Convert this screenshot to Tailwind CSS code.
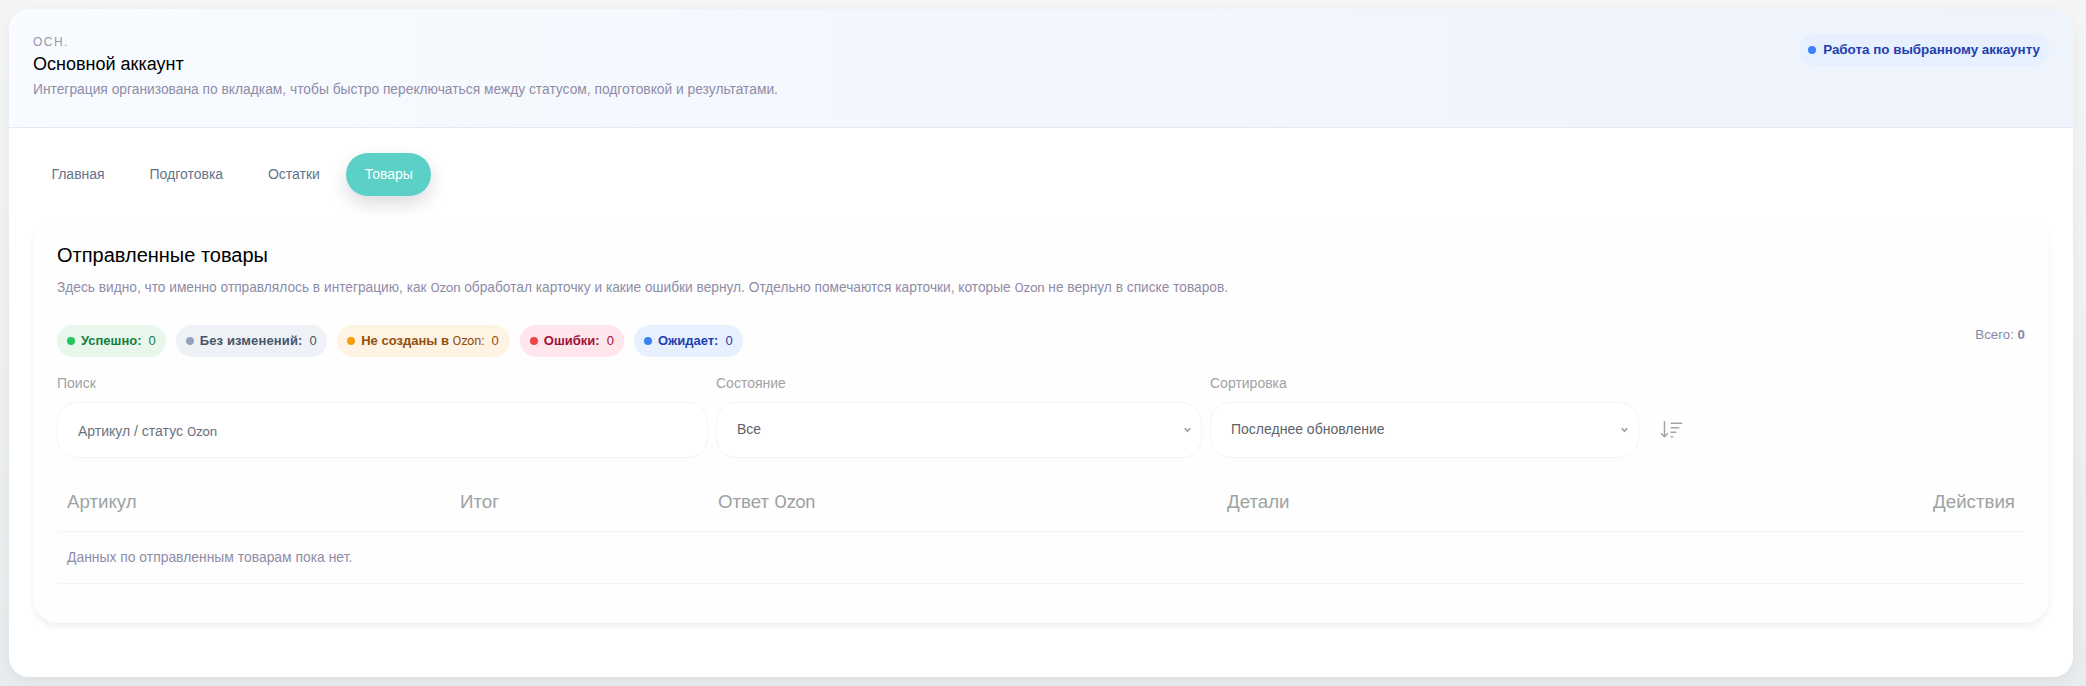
<!DOCTYPE html>
<html lang="ru">
<head>
<meta charset="utf-8">
<script src="https://cdn.jsdelivr.net/npm/@tailwindcss/browser@4"></script>
<title>Товары</title>
</head>
<body class="h-[686px] overflow-hidden bg-linear-to-b from-[#f5f5f5] to-[#e8ecee] pt-[9px] pl-[9px] pr-[13px] font-['Liberation_Sans',sans-serif] text-[14px]">
<main class="h-[668px] overflow-hidden rounded-[20px] bg-white shadow-[0_4px_16px_rgba(15,23,42,0.05)]">
  <header class="flex h-[119px] items-start justify-between border-b border-[#e3eaf5] bg-linear-to-r from-[#f8fbff] to-[#eef3fc] px-6 pt-[25px]">
    <div>
      <div class="text-[12px] leading-[16px] tracking-[0.12em] text-[#9a96ad]">ОСН.</div>
      <div class="mt-[2px] text-[18px] leading-[24px] text-black">Основной аккаунт</div>
      <p class="mt-[4px] text-[13.8px] leading-[20px] text-[#8f8ca8]">Интеграция организована по вкладкам, чтобы быстро переключаться между статусом, подготовкой и результатами.</p>
    </div>
    <div class="flex h-8 items-center gap-[7px] rounded-full bg-[#e7f0ff] pl-[9px] pr-[9px] text-[13.4px] font-bold text-[#1e40af]"><span class="size-2 rounded-full bg-[#3b82f6]"></span>Работа по выбранному аккаунту</div>
  </header>
  <div class="px-6 pt-[25px]">
    <nav class="flex gap-2 text-[14px] text-[#64748b]">
      <a class="flex h-[43px] items-center px-[18.4px]">Главная</a>
      <a class="flex h-[43px] items-center px-[18.4px]">Подготовка</a>
      <a class="flex h-[43px] items-center px-[18.4px]">Остатки</a>
      <a class="flex h-[43px] items-center rounded-full bg-[#5ad0c6] px-[18.4px] text-white shadow-[0_8px_18px_rgba(15,23,42,0.15)]">Товары</a>
    </nav>
    <section class="mt-[22px] h-[405px] rounded-[24px] border border-[#fbfbfb] bg-[#fefefe] px-[23px] pt-[23px] shadow-[0_4px_6px_-1px_rgba(15,23,42,0.08)]">
      <h2 class="text-[20px] leading-[26px] text-black">Отправленные товары</h2>
      <p class="mt-[9px] text-[13.72px] leading-[20px] text-[#8f8ca8]">Здесь видно, что именно отправлялось в интеграцию, как <span class="font-['Roboto',sans-serif] text-[13.5px] tracking-[-0.02em]">Ozon</span> обработал карточку и какие ошибки вернул. Отдельно помечаются карточки, которые <span class="font-['Roboto',sans-serif] text-[13.5px] tracking-[-0.02em]">Ozon</span> не вернул в списке товаров.</p>
      <div class="mt-[27px] flex items-start justify-between">
        <div class="flex gap-[10px] text-[13px]">
          <div class="flex h-8 items-center gap-[6px] rounded-full bg-[#e8f6ec] px-[10px] text-[#15803d]"><span class="size-2 rounded-full bg-[#22c55e]"></span><b>Успешно:</b><span class="ml-[1px]">0</span></div>
          <div class="flex h-8 items-center gap-[6px] rounded-full bg-[#eef2f7] pl-[10px] pr-[10.5px] text-[#475569]"><span class="size-2 rounded-full bg-[#94a3b8]"></span><b class="tracking-[0.01em]">Без изменений:</b><span class="ml-[1px]">0</span></div>
          <div class="flex h-8 items-center gap-[6px] rounded-full bg-[#fff3e4] pl-[10px] pr-[11px] text-[#92500f]"><span class="size-2 rounded-full bg-[#f59e0b]"></span><span><b>Не созданы в</b> <span class="font-['Roboto',sans-serif] text-[12.8px] tracking-[-0.02em]">Ozon</span><b class="font-normal">:</b></span><span class="ml-[1px]">0</span></div>
          <div class="flex h-8 items-center gap-[6px] rounded-full bg-[#ffe6ec] px-[10px] text-[#9f1239]"><span class="size-2 rounded-full bg-[#ef4444]"></span><b>Ошибки:</b><span class="ml-[1px]">0</span></div>
          <div class="flex h-8 items-center gap-[6px] rounded-full bg-[#e7f0ff] px-[10px] text-[#1e40af]"><span class="size-2 rounded-full bg-[#3b82f6]"></span><b>Ожидает:</b><span class="ml-[1px]">0</span></div>
        </div>
        <div class="text-[13.3px] leading-[20px] text-[#8588a8]">Всего: <b>0</b></div>
      </div>
      <div class="mt-[16px] grid grid-cols-[651px_486px_429px_auto] gap-x-2 items-end">
        <label class="block">
          <span class="block text-[14px] leading-[20px] text-[#a3a3a3]">Поиск</span>
          <span class="mt-[9px] flex h-[56px] items-center rounded-[20px] border border-[#f3f4f6] bg-white px-[20px] pt-[2px] text-[14px] text-[#6b7280]">Артикул / статус&nbsp;<span class="font-['Roboto',sans-serif] text-[13.5px] tracking-[-0.02em]">Ozon</span></span>
        </label>
        <label class="block">
          <span class="block text-[14px] leading-[20px] text-[#a3a3a3]">Состояние</span>
          <span class="mt-[9px] flex h-[56px] items-center justify-between rounded-[20px] border border-[#f3f4f6] bg-white pl-[20px] pr-[10px] text-[14px] text-[#5f6368]"><span class="-mt-[2px]">Все</span>
            <svg class="h-[6px] w-[7px] text-[#999]" viewBox="0 0 7 6" fill="none" stroke="currentColor" stroke-width="1.6"><path d="M0.7 1.2 3.5 4.2 6.3 1.2"/></svg></span>
        </label>
        <label class="block">
          <span class="block text-[14px] leading-[20px] text-[#a3a3a3]">Сортировка</span>
          <span class="mt-[9px] flex h-[56px] items-center justify-between rounded-[20px] border border-[#f3f4f6] bg-white pl-[20px] pr-[10px] text-[14px] text-[#5f6368]"><span class="-mt-[2px]">Последнее обновление</span>
            <svg class="h-[6px] w-[7px] text-[#999]" viewBox="0 0 7 6" fill="none" stroke="currentColor" stroke-width="1.6"><path d="M0.7 1.2 3.5 4.2 6.3 1.2"/></svg></span>
        </label>
        <div class="flex h-[56px] items-center pl-[13px]">
          <svg class="size-6 text-[#a3a3a3]" viewBox="0 0 16 16" fill="currentColor"><path d="M3.5 2.5a.5.5 0 0 0-1 0v8.793l-1.146-1.147a.5.5 0 0 0-.708.708l2 1.999.007.007a.497.497 0 0 0 .7-.006l2-2a.5.5 0 0 0-.707-.708L3.5 11.293zm3.5 1a.5.5 0 0 1 .5-.5h7a.5.5 0 0 1 0 1h-7a.5.5 0 0 1-.5-.5M7.5 6a.5.5 0 0 0 0 1h5a.5.5 0 0 0 0-1zm0 3a.5.5 0 0 0 0 1h3a.5.5 0 0 0 0-1zm0 3a.5.5 0 0 0 0 1h1a.5.5 0 0 0 0-1z"/></svg>
        </div>
      </div>
      <div class="mt-[16px]">
        <div class="grid h-[58px] grid-cols-[394px_258px_508px_1fr] items-center border-b border-[#f3f4f6] px-[10px] text-[18.7px] text-[#9ca3a3]">
          <span>Артикул</span><span class="-ml-px">Итог</span><span class="-ml-px">Ответ <span class="font-['Roboto',sans-serif] text-[18.4px] tracking-[-0.02em]">Ozon</span></span><span class="flex justify-between"><span>Детали</span><span>Действия</span></span>
        </div>
        <div class="flex h-[52px] items-center border-b border-[#f3f4f6] px-[10px] text-[13.9px] text-[#8f8ca8]">Данных по отправленным товарам пока нет.</div>
      </div>
    </section>
  </div>
</main>
</body>
</html>
